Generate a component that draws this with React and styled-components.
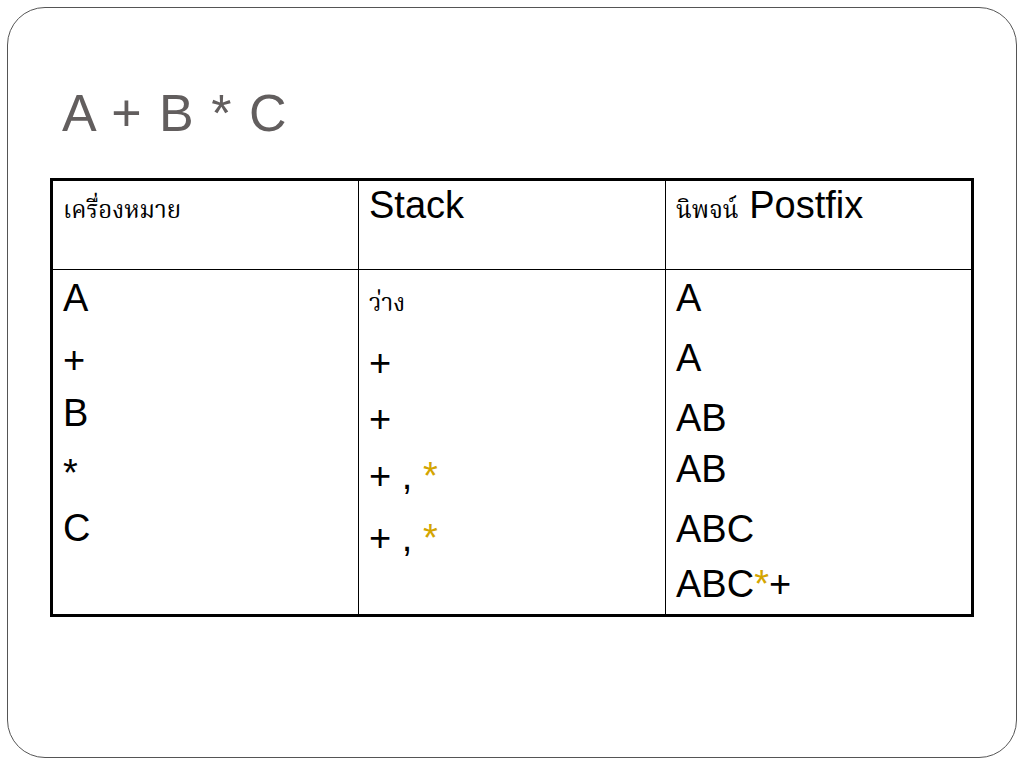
import React from "react";
import styled, { createGlobalStyle } from "styled-components";

const GlobalStyle = createGlobalStyle`
  html, body {
    margin: 0;
    padding: 0;
    background: #ffffff;
  }
  * {
    box-sizing: border-box;
  }
`;

const Slide = styled.div`
  width: 1024px;
  height: 768px;
  padding: 7px 7px 10px 7px;
  background: #ffffff;
`;

const Frame = styled.div`
  height: 100%;
  border: 1px solid #555;
  border-radius: 38px;
  padding: 79px 0 0 42px;
`;

const Title = styled.h1`
  margin: 0 0 39px 0;
  padding-left: 12px;
  font-family: "Liberation Sans", Arial, sans-serif;
  font-weight: 400;
  font-size: 52px;
  line-height: 52px;
  letter-spacing: 1.5px;
  color: #625e5e;
`;

const Grid = styled.div`
  display: grid;
  grid-template-columns: 306px 307px 1fr;
  grid-template-rows: 89px 344px;
  width: 924px;
  border: 3px solid #000;
`;

const Cell = styled.div`
  padding: ${(p) => (p.$head ? "4px 10px 0 10px" : "6px 10px 0 10px")};
  border-right: ${(p) => (p.$last ? "none" : "1px solid #000")};
  border-bottom: ${(p) => (p.$head ? "1px solid #000" : "none")};
  display: flex;
  flex-direction: column;
`;

const HeadText = styled.div`
  font-family: "Liberation Sans", Arial, sans-serif;
  font-size: 38px;
  line-height: 40px;
  color: #000;
  white-space: nowrap;
`;

const Thai = styled.span`
  font-family: "Liberation Serif", "Noto Serif Thai", "Noto Sans Thai", serif;
  font-size: ${(p) => p.$size || 24}px;
  vertical-align: baseline;
`;

const Line = styled.div`
  margin-top: ${(p) => p.$gap || 0}px;
  font-family: "Liberation Sans", Arial, sans-serif;
  font-size: 38px;
  line-height: 44px;
  height: 44px;
  color: #000;
  white-space: pre;
`;

const Star = styled.span`
  color: #d4a500;
`;

const symbols = [
  { text: "A", gap: 0 },
  { text: "+", gap: 18 },
  { text: "B", gap: 9 },
  { text: "*", gap: 16 },
  { text: "C", gap: 11 },
];

const stack = [
  { text: "+", gap: 21 },
  { text: "+", gap: 12 },
  { text: "+ , ", star: true, gap: 13 },
  { text: "+ , ", star: true, gap: 18 },
];

const postfix = [
  { text: "A", gap: 0 },
  { text: "A", gap: 16 },
  { text: "AB", gap: 16 },
  { text: "AB", gap: 7 },
  { text: "ABC", gap: 16 },
  { text: "ABC", star: true, tail: "+", gap: 11 },
];

const renderLine = (row, i) => (
  <Line key={i} $gap={row.gap}>
    {row.text}
    {row.star && <Star>*</Star>}
    {row.tail}
  </Line>
);

const App = () => {
  return (
    <Slide>
      <GlobalStyle />
      <Frame>
        <Title>A + B * C</Title>
        <Grid>
          <Cell $head>
            <HeadText>
              <Thai>เครื่องหมาย</Thai>
            </HeadText>
          </Cell>
          <Cell $head>
            <HeadText>Stack</HeadText>
          </Cell>
          <Cell $head $last>
            <HeadText>
              <Thai>นิพจน์</Thai> Postfix
            </HeadText>
          </Cell>

          <Cell>{symbols.map(renderLine)}</Cell>
          <Cell>
            <Line>
              <Thai>ว่าง</Thai>
            </Line>
            {stack.map(renderLine)}
          </Cell>
          <Cell $last>{postfix.map(renderLine)}</Cell>
        </Grid>
      </Frame>
    </Slide>
  );
};

export default App;
